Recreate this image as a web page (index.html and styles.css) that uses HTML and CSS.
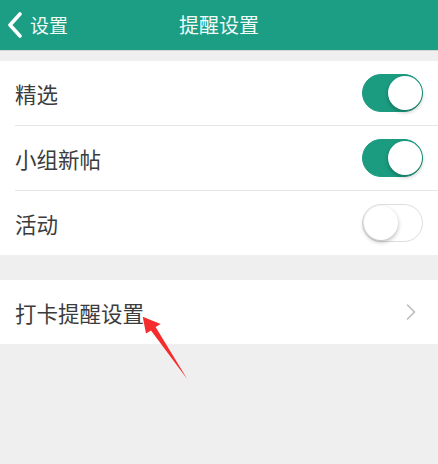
FILE: index.html
```html
<!DOCTYPE html>
<html lang="zh-CN">
<head>
<meta charset="utf-8">
<title>提醒设置</title>
<link rel="stylesheet" href="styles.css">
</head>
<body>
<header class="nav">
  <div class="back">
    <svg class="back-icon" width="16" height="26" viewBox="0 0 16 26"><path d="M13 2 L3 13 L13 24" fill="none" stroke="#ffffff" stroke-width="3.6" stroke-linecap="round" stroke-linejoin="round"/></svg>
    <span class="back-text">设置</span>
  </div>
  <div class="title">提醒设置</div>
  <div class="nav-right"></div>
</header>

<section class="group first">
  <div class="row">
    <span class="label">精选</span>
    <span class="toggle on"><span class="knob"></span></span>
  </div>
  <div class="row">
    <span class="label">小组新帖</span>
    <span class="toggle on"><span class="knob"></span></span>
  </div>
  <div class="row">
    <span class="label">活动</span>
    <span class="toggle"><span class="knob"></span></span>
  </div>
</section>

<section class="group second">
  <div class="row">
    <span class="label">打卡提醒设置</span>
    <svg class="chev" width="12" height="18" viewBox="0 0 12 18"><path d="M2.5 2 L9.5 9 L2.5 16" fill="none" stroke="#bdbdbd" stroke-width="1.6" stroke-linecap="round" stroke-linejoin="round"/></svg>
  </div>
</section>

<svg class="arrow" width="70" height="90" viewBox="0 0 70 90">
  <polygon points="12.7,16.7 30.7,24 25.6,27 57.5,79.5 21,30.6 16,33.5" fill="#f42c2c"/>
</svg>
</body>
</html>
```

FILE: styles.css
```css
html, body {
  margin: 0;
  padding: 0;
}
body {
  position: relative;
  width: 438px;
  height: 464px;
  overflow: hidden;
  background: #efefef;
  font-family: "Noto Sans CJK SC", "Noto Sans", sans-serif;
}
.nav {
  height: 50px;
  background: #1b9e84;
  display: grid;
  grid-template-columns: 1fr auto 1fr;
  align-items: center;
  box-shadow: 0 1px 0 #d6d6d6;
  color: #f2faf8;
}
.back {
  display: flex;
  align-items: center;
  padding-left: 7px;
  gap: 7px;
}
.back-icon {
  display: block;
}
.back-text {
  font-size: 19px;
  line-height: 24px;
}
.title {
  font-size: 20px;
  line-height: 24px;
}
.group {
  background: #ffffff;
}
.group.first {
  margin-top: 11px;
}
.group.second {
  margin-top: 25px;
}
.row {
  height: 64px;
  margin-left: 15px;
  padding-right: 15px;
  display: flex;
  align-items: center;
  justify-content: space-between;
}
.row + .row {
  border-top: 1px solid #e6e6e6;
}
.label {
  font-size: 21.5px;
  color: #3c3c3c;
}
.toggle {
  position: relative;
  width: 61px;
  height: 38px;
  border-radius: 19px;
  box-sizing: border-box;
  background: #ffffff;
  border: 1.5px solid #dedede;
}
.toggle.on {
  background: #1b9c80;
  border-color: #1b9c80;
}
.knob {
  position: absolute;
  top: 0.5px;
  left: 0.5px;
  width: 34px;
  height: 34px;
  border-radius: 50%;
  background: #ffffff;
  box-shadow: 0 2px 4px rgba(0, 0, 0, 0.28);
}
.toggle.on .knob {
  left: auto;
  right: 0.5px;
}
.chev {
  display: block;
  margin-right: 6px;
}
.arrow {
  position: absolute;
  left: 130px;
  top: 300px;
}
```
